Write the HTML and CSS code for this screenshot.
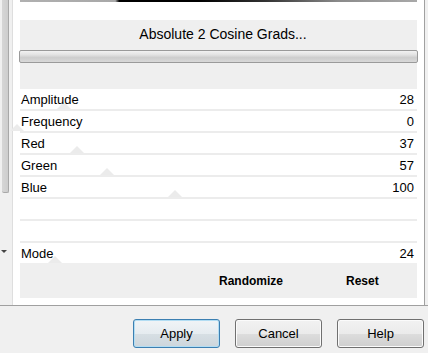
FILE: index.html
```html
<!DOCTYPE html>
<html>
<head>
<meta charset="utf-8">
<link rel="stylesheet" href="styles.css">
</head>
<body>
<div class="frame">
  <div class="scroll">
    <div class="thumb"></div>
    <div class="arrow"></div>
  </div>
  <div class="panel">
    <div class="grad"></div>
    <div class="spacer"></div>
    <div class="head">
      <div class="title">Absolute 2 Cosine Grads...</div>
      <div class="bar"></div>
    </div>
    <div class="rows">
      <div class="row"><span>Amplitude</span><span>28</span><i class="tri" style="left:37px"></i></div>
      <div class="row"><span>Frequency</span><span>0</span><i class="tri" style="left:-10px"></i></div>
      <div class="row"><span>Red</span><span>37</span><i class="tri" style="left:50px"></i></div>
      <div class="row"><span>Green</span><span>57</span><i class="tri" style="left:80px"></i></div>
      <div class="row"><span>Blue</span><span>100</span><i class="tri" style="left:148px"></i></div>
      <div class="row"></div>
      <div class="row"></div>
      <div class="row last"><span>Mode</span><span>24</span><i class="tri" style="left:28px"></i></div>
    </div>
    <div class="actions">
      <span class="act rand">Randomize</span>
      <span class="act reset">Reset</span>
    </div>
  </div>
</div>
<div class="buttons">
  <button class="btn default">Apply</button>
  <button class="btn">Cancel</button>
  <button class="btn">Help</button>
</div>
</body>
</html>
```

FILE: styles.css
```css
html, body {
  margin: 0;
  padding: 0;
}
body {
  width: 428px;
  height: 353px;
  overflow: hidden;
  background: #f0f0f0;
  font-family: "Liberation Sans", Arial, sans-serif;
  color: #000;
}
.frame {
  display: flex;
  height: 305px;
  border-bottom: 1px solid #a0a0a0;
}
.scroll {
  width: 12px;
  position: relative;
  background: #f0f0f0;
}
.thumb {
  margin-left: 2px;
  width: 6px;
  height: 192px;
  background: linear-gradient(to right, #d6d6d6, #cdcdcd);
  border-right: 1px solid #a8a8a8;
  border-bottom: 1px solid #a8a8a8;
  border-radius: 0 0 2px 2px;
}
.arrow {
  position: absolute;
  left: 1px;
  top: 250px;
  width: 0;
  height: 0;
  border-left: 3px solid transparent;
  border-right: 3px solid transparent;
  border-top: 3px solid #444;
}
.panel {
  flex: 1;
  background: #fff;
  border-left: 1px solid #dedede;
  border-right: 1px solid #a0a0a0;
  margin-right: 3px;
  padding: 0 7px;
}
.grad {
  height: 2px;
  background: linear-gradient(to right, #b0b0b0 0%, #a8a8a8 24%, #000 25%, #000 45%, #333 62%, #8a8a8a 80%, #a9a9a9 100%);
}
.spacer {
  height: 18px;
}
.head {
  height: 69px;
  background: #efefef;
  padding-top: 6px;
  box-sizing: border-box;
}
.title {
  text-align: center;
  font-size: 14px;
  line-height: 16px;
  padding-left: 9px;
}
.bar {
  margin: 8px -1px 0;
  height: 11px;
  border: 1px solid #9a9a9a;
  border-radius: 2px;
  background: linear-gradient(to bottom, #f2f2f2 0%, #e2e2e2 35%, #cdcdcd 60%, #d8d8d8 100%);
}
.rows {
  display: flex;
  flex-direction: column;
}
.row {
  position: relative;
  height: 20px;
  border-bottom: 2px solid #ececec;
  display: flex;
  justify-content: space-between;
  align-items: center;
  font-size: 13px;
  padding: 0 3px 0 1px;
}
.row span {
  position: relative;
  z-index: 1;
}
.row.last {
  border-bottom: none;
}
.tri {
  position: absolute;
  bottom: 0;
  width: 0;
  height: 0;
  border-left: 7px solid transparent;
  border-right: 7px solid transparent;
  border-bottom: 7px solid #ebebeb;
}
.actions {
  height: 35px;
  background: #efefef;
  position: relative;
  font-size: 12px;
  font-weight: bold;
  display: flex;
  align-items: center;
}
.act.rand {
  margin-left: 199px;
}
.act.reset {
  margin-left: 63px;
}
.buttons {
  display: flex;
  justify-content: flex-end;
  gap: 15px;
  padding: 13px 4px 0 0;
}
.btn {
  width: 87px;
  height: 29px;
  font-family: "Liberation Sans", Arial, sans-serif;
  font-size: 13px;
  color: #000;
  border: 1px solid #707070;
  border-radius: 3px;
  background: linear-gradient(to bottom, #f2f2f2 0%, #ebebeb 50%, #dddddd 51%, #cfcfcf 100%);
  box-shadow: inset 0 0 0 1px #fbfbfb;
  padding: 0;
}
.btn.default {
  border-color: #3c7fb1;
  box-shadow: inset 0 0 0 1px #b2ddf3;
  background: linear-gradient(to bottom, #f0f4f7 0%, #e6ecf0 50%, #d7dfe4 51%, #cdd6dc 100%);
}
```
